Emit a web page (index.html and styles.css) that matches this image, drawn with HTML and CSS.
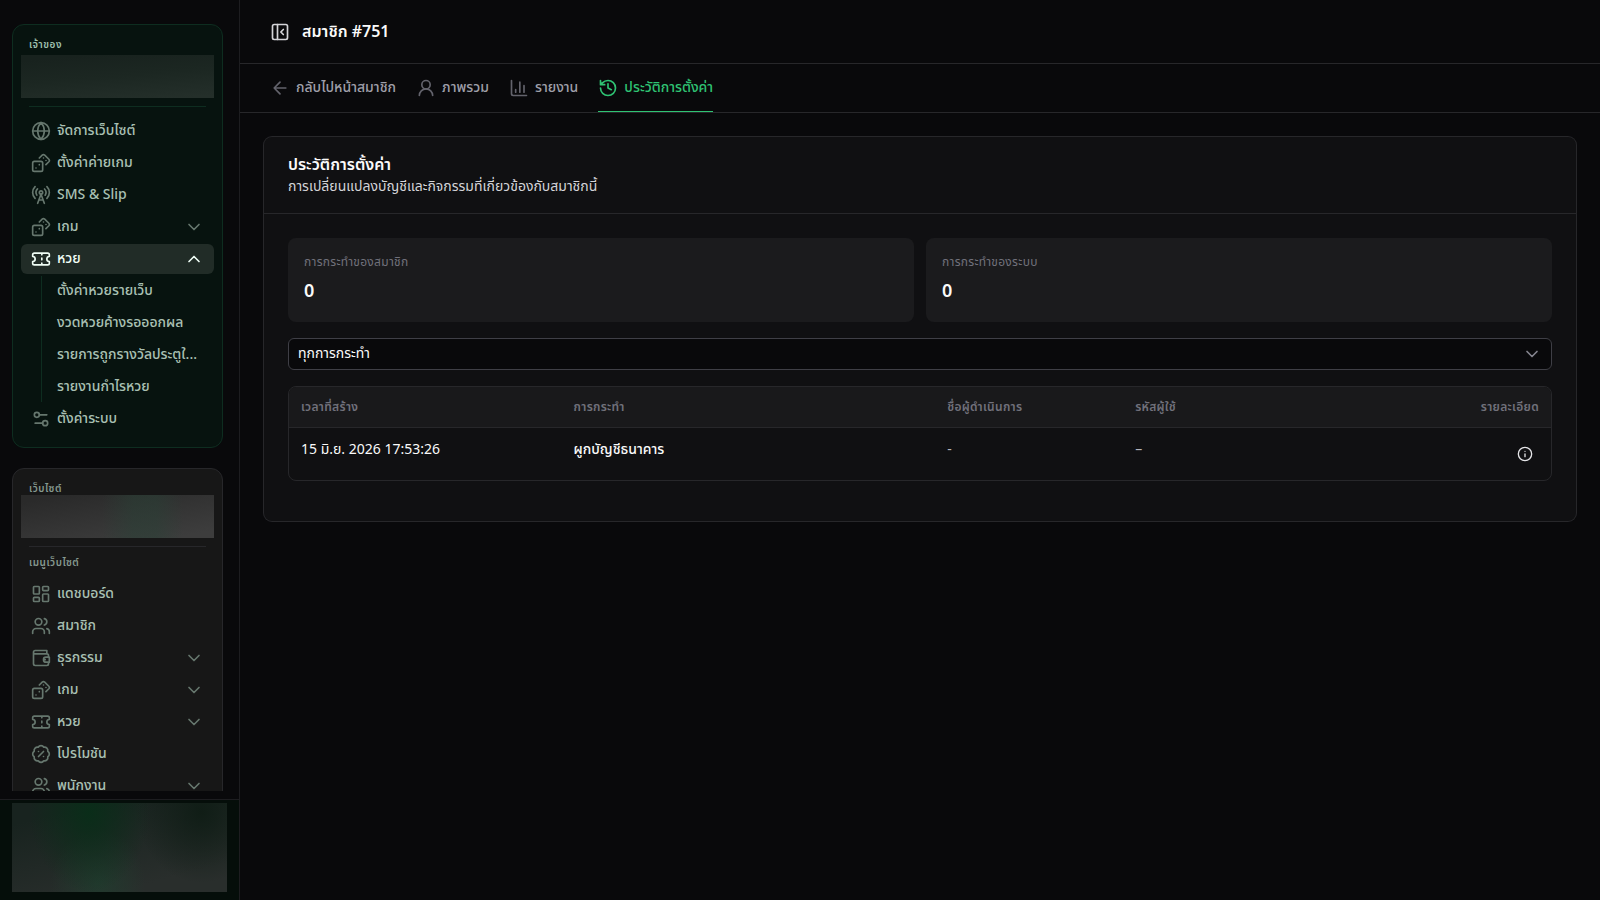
FILE: index.html
```html
<!DOCTYPE html>
<html lang="th">
<head>
<meta charset="utf-8">
<meta name="viewport" content="width=device-width, initial-scale=1">
<title>สมาชิก #751</title>
<link rel="stylesheet" href="styles.css">
</head>
<body>
<svg class="sprite" aria-hidden="true">
  <symbol id="globe" viewBox="0 0 24 24"><circle cx="12" cy="12" r="10"/><path d="M12 2a14.5 14.5 0 0 0 0 20 14.5 14.5 0 0 0 0-20M2 12h20"/></symbol>
  <symbol id="dices" viewBox="0 0 24 24"><rect width="12" height="12" x="2" y="10" rx="2"/><path d="m17.92 14 3.5-3.5a2.24 2.24 0 0 0 0-3l-5-4.92a2.24 2.24 0 0 0-3 0L10 6M6 18h.01M10 14h.01M15 6h.01M18 9h.01"/></symbol>
  <symbol id="tower" viewBox="0 0 24 24"><path d="M4.9 16.1C1 12.2 1 5.8 4.9 1.9M7.8 4.7a6.14 6.14 0 0 0-.8 7.5"/><circle cx="12" cy="9" r="2"/><path d="M16.2 4.8c2 2 2.26 5.11.8 7.47M19.1 1.9a9.96 9.96 0 0 1 0 14.1M9.5 18h5M8 22l4-11 4 11"/></symbol>
  <symbol id="ticket" viewBox="0 0 24 24"><path d="M2 9a3 3 0 0 1 0 6v2a2 2 0 0 0 2 2h16a2 2 0 0 0 2-2v-2a3 3 0 0 1 0-6V7a2 2 0 0 0-2-2H4a2 2 0 0 0-2 2ZM13 5v2M13 17v2M13 11v2"/></symbol>
  <symbol id="sliders" viewBox="0 0 24 24"><path d="M14 17H5M19 7h-9"/><circle cx="17" cy="17" r="3"/><circle cx="7" cy="7" r="3"/></symbol>
  <symbol id="dashboard" viewBox="0 0 24 24"><rect width="7" height="9" x="3" y="3" rx="1"/><rect width="7" height="5" x="14" y="3" rx="1"/><rect width="7" height="9" x="14" y="12" rx="1"/><rect width="7" height="5" x="3" y="16" rx="1"/></symbol>
  <symbol id="users" viewBox="0 0 24 24"><path d="M16 21v-2a4 4 0 0 0-4-4H6a4 4 0 0 0-4 4v2M16 3.128a4 4 0 0 1 0 7.744M22 21v-2a4 4 0 0 0-3-3.87"/><circle cx="9" cy="7" r="4"/></symbol>
  <symbol id="wallet" viewBox="0 0 24 24"><path d="M17 14h.01M21 11V9a2 2 0 0 0-2-2H5a2 2 0 0 1 0-4h14v4M3 5v14a2 2 0 0 0 2 2h14a2 2 0 0 0 2-2v-2M22 11h-4a3 3 0 0 0 0 6h4z"/></symbol>
  <symbol id="percent" viewBox="0 0 24 24"><path d="M3.85 8.62a4 4 0 0 1 4.78-4.77 4 4 0 0 1 6.74 0 4 4 0 0 1 4.78 4.78 4 4 0 0 1 0 6.74 4 4 0 0 1-4.77 4.78 4 4 0 0 1-6.75 0 4 4 0 0 1-4.78-4.77 4 4 0 0 1 0-6.76ZM15 9l-6 6M9 9h.01M15 15h.01"/></symbol>
  <symbol id="down" viewBox="0 0 24 24"><path d="m6 9 6 6 6-6"/></symbol>
  <symbol id="up" viewBox="0 0 24 24"><path d="m18 15-6-6-6 6"/></symbol>
  <symbol id="panel" viewBox="0 0 24 24"><rect width="18" height="18" x="3" y="3" rx="2"/><path d="M9 3v18M16 15l-3-3 3-3"/></symbol>
  <symbol id="back" viewBox="0 0 24 24"><path d="m12 19-7-7 7-7M19 12H5"/></symbol>
  <symbol id="user" viewBox="0 0 24 24"><circle cx="12" cy="8" r="5"/><path d="M20 21a8 8 0 0 0-16 0"/></symbol>
  <symbol id="chart" viewBox="0 0 24 24"><path d="M3 3v16a2 2 0 0 0 2 2h16M18 17V9M13 17V5M8 17v-3"/></symbol>
  <symbol id="history" viewBox="0 0 24 24"><path d="M3 12a9 9 0 1 0 9-9 9.75 9.75 0 0 0-6.74 2.74L3 8M3 3v5h5M12 7v5l4 2"/></symbol>
  <symbol id="info" viewBox="0 0 24 24"><circle cx="12" cy="12" r="10"/><path d="M12 16v-4M12 8h.01"/></symbol>
</svg>
<div class="app">
  <aside class="sidebar">
    <div class="sidebar-scroll">
      <section class="group group-owner">
        <h2 class="group-label">เจ้าของ</h2>
        <div class="masked masked-owner"></div>
        <hr class="rule">
        <nav class="menu">
          <a class="item" href="#"><svg class="icon"><use href="#globe"/></svg><span class="item-text">จัดการเว็บไซต์</span></a>
          <a class="item" href="#"><svg class="icon"><use href="#dices"/></svg><span class="item-text">ตั้งค่าค่ายเกม</span></a>
          <a class="item" href="#"><svg class="icon"><use href="#tower"/></svg><span class="item-text">SMS &amp; Slip</span></a>
          <button class="item" type="button"><svg class="icon"><use href="#dices"/></svg><span class="item-text">เกม</span><svg class="icon"><use href="#down"/></svg></button>
          <button class="item item-active" type="button" aria-expanded="true"><svg class="icon"><use href="#ticket"/></svg><span class="item-text">หวย</span><svg class="icon"><use href="#up"/></svg></button>
          <div class="submenu">
            <a class="item" href="#"><span class="item-text">ตั้งค่าหวยรายเว็บ</span></a>
            <a class="item" href="#"><span class="item-text">งวดหวยค้างรอออกผล</span></a>
            <a class="item" href="#"><span class="item-text">รายการถูกรางวัลประตูใ...</span></a>
            <a class="item" href="#"><span class="item-text">รายงานกำไรหวย</span></a>
          </div>
          <a class="item" href="#"><svg class="icon"><use href="#sliders"/></svg><span class="item-text">ตั้งค่าระบบ</span></a>
        </nav>
      </section>
      <section class="group group-site">
        <h2 class="group-label group-label-tight">เว็บไซต์</h2>
        <div class="masked masked-site"></div>
        <hr class="rule">
        <h3 class="group-label group-label-menu">เมนูเว็บไซต์</h3>
        <nav class="menu">
          <a class="item" href="#"><svg class="icon"><use href="#dashboard"/></svg><span class="item-text">แดชบอร์ด</span></a>
          <a class="item" href="#"><svg class="icon"><use href="#users"/></svg><span class="item-text">สมาชิก</span></a>
          <button class="item" type="button"><svg class="icon"><use href="#wallet"/></svg><span class="item-text">ธุรกรรม</span><svg class="icon"><use href="#down"/></svg></button>
          <button class="item" type="button"><svg class="icon"><use href="#dices"/></svg><span class="item-text">เกม</span><svg class="icon"><use href="#down"/></svg></button>
          <button class="item" type="button"><svg class="icon"><use href="#ticket"/></svg><span class="item-text">หวย</span><svg class="icon"><use href="#down"/></svg></button>
          <a class="item" href="#"><svg class="icon"><use href="#percent"/></svg><span class="item-text">โปรโมชัน</span></a>
          <button class="item" type="button"><svg class="icon"><use href="#users"/></svg><span class="item-text">พนักงาน</span><svg class="icon"><use href="#down"/></svg></button>
        </nav>
      </section>
    </div>
    <div class="account"><div class="masked masked-account"></div></div>
  </aside>
  <div class="page">
    <header class="topbar">
      <button class="icon-button" type="button" aria-label="ย่อเมนู"><svg class="icon"><use href="#panel"/></svg></button>
      <h1 class="page-title">สมาชิก #751</h1>
    </header>
    <nav class="tabs">
      <a class="tab" href="#"><svg class="icon"><use href="#back"/></svg><span class="tab-text">กลับไปหน้าสมาชิก</span></a>
      <a class="tab" href="#"><svg class="icon"><use href="#user"/></svg><span class="tab-text">ภาพรวม</span></a>
      <a class="tab" href="#"><svg class="icon"><use href="#chart"/></svg><span class="tab-text">รายงาน</span></a>
      <a class="tab tab-active" href="#" aria-current="page"><svg class="icon"><use href="#history"/></svg><span class="tab-text">ประวัติการตั้งค่า</span></a>
    </nav>
    <main class="content">
      <section class="card">
        <header class="card-header">
          <h2 class="card-title">ประวัติการตั้งค่า</h2>
          <p class="card-subtitle">การเปลี่ยนแปลงบัญชีและกิจกรรมที่เกี่ยวข้องกับสมาชิกนี้</p>
        </header>
        <div class="card-body">
          <div class="stats">
            <div class="stat"><p class="stat-label">การกระทำของสมาชิก</p><p class="stat-value">0</p></div>
            <div class="stat"><p class="stat-label">การกระทำของระบบ</p><p class="stat-value">0</p></div>
          </div>
          <div class="select-wrap">
            <select class="select" aria-label="การกระทำ"><option>ทุกการกระทำ</option></select>
            <svg class="icon select-arrow"><use href="#down"/></svg>
          </div>
          <div class="table-wrap">
            <table class="table">
              <colgroup><col class="col-time"><col class="col-action"><col class="col-actor"><col class="col-user"><col class="col-detail"></colgroup>
              <thead><tr><th>เวลาที่สร้าง</th><th>การกระทำ</th><th>ชื่อผู้ดำเนินการ</th><th>รหัสผู้ใช้</th><th class="end">รายละเอียด</th></tr></thead>
              <tbody><tr><td>15 มิ.ย. 2026 17:53:26</td><td class="strong">ผูกบัญชีธนาคาร</td><td class="dim">-</td><td class="dim">–</td><td class="end"><button class="info-button" type="button" aria-label="รายละเอียด"><svg class="icon icon-small"><use href="#info"/></svg></button></td></tr></tbody>
            </table>
          </div>
        </div>
      </section>
    </main>
  </div>
</div>
</body>
</html>
```
FILE: styles.css
```css
* { box-sizing: border-box; }
body {
  margin: 0;
  background: #09090b;
  color: #fafafa;
  font-family: "Noto Sans", "Noto Sans Thai", sans-serif;
  font-size: 14px;
  line-height: 20px;
}
h1, h2, h3, p { margin: 0; }
a { color: inherit; text-decoration: none; }
button, select { font: inherit; color: inherit; background: none; border: 0; padding: 0; }
.sprite { display: none; }
.icon {
  width: 20px;
  height: 20px;
  flex: none;
  fill: none;
  stroke: currentColor;
  stroke-width: 2;
  stroke-linecap: round;
  stroke-linejoin: round;
}
.icon-small { width: 16px; height: 16px; }

.app { display: flex; height: 100vh; }
.sidebar {
  width: 240px;
  flex: none;
  display: flex;
  flex-direction: column;
  border-right: 1px solid #1d1d20;
}
.sidebar-scroll {
  flex: 1;
  min-height: 0;
  overflow: hidden;
  display: flex;
  flex-direction: column;
  gap: 20px;
  margin-bottom: 8px;
  padding: 24px 16px 0 12px;
}
.group { flex: none; border: 1px solid; border-radius: 12px; padding: 8px 8px 13px; }
.group-owner { background: #07130f; border-color: #0e2d20; }
.group-site { background: #171717; border-color: #27272a; }
.group-label {
  padding: 0 8px;
  font-size: 10px;
  line-height: 22px;
  font-weight: 600;
  letter-spacing: 0.5px;
  color: #9dbfad;
}
.group-site .group-label { color: #869990; }
.group-label-tight { height: 18px; }
.group-label-menu { padding-bottom: 6px; }
.masked { height: 43px; }
.masked-owner { background: linear-gradient(175deg, #18221e 10%, #1c2722 50%, #242f2a 95%); }
.masked-site {
  background:
    linear-gradient(90deg, transparent 42%, #28423670 58%, #28423670 70%, transparent 84%),
    linear-gradient(170deg, #2a2a2a 10%, #3d3d3d 90%);
}
.rule { height: 1px; margin: 8px 8px 9px; border: 0; background: #0e2d20; }
.group-site .rule { margin-bottom: 4px; background: #27272a; }
.menu, .submenu { display: flex; flex-direction: column; gap: 2px; }
.item {
  display: flex;
  align-items: center;
  gap: 6px;
  height: 30px;
  padding: 0 10px;
  border-radius: 6px;
  text-align: left;
  font-weight: 500;
  color: #a9c0b3;
}
.item .icon { color: #66776e; }
.item-text { flex: 1; min-width: 0; padding-bottom: 2px; white-space: nowrap; }
.item-active { background: #212c27; color: #effdf5; }
.item-active .icon { color: #effdf5; }
.submenu { margin-left: 20px; border-left: 1px solid #0e2d20; }
.submenu .item { padding: 0 16px 0 15px; }
.account { padding: 3px 12px 8px; border-top: 1px solid #1d1d20; background: #050e0a; }
.masked-account {
  height: 89px;
  background:
    radial-gradient(ellipse 28% 90% at 36% 10%, #0a2d19 0, transparent 100%),
    radial-gradient(ellipse 30% 80% at 88% 10%, #101d16 0, transparent 100%),
    radial-gradient(ellipse 22% 60% at 40% 90%, #223a2e 0, transparent 100%),
    linear-gradient(165deg, #18231f 15%, #292e2c 80%);
}

.page { flex: 1; min-width: 0; }
.topbar {
  display: flex;
  align-items: center;
  gap: 12px;
  height: 64px;
  padding: 0 30px;
  border-bottom: 1px solid #27272a;
}
.icon-button { display: flex; color: #d4d4d8; }
.page-title { padding-bottom: 2px; font-size: 16px; line-height: 24px; font-weight: 600; }
.tabs {
  display: flex;
  gap: 20px;
  height: 49px;
  padding: 0 30px;
  border-bottom: 1px solid #27272a;
}
.tab { display: flex; align-items: center; gap: 6px; color: #9f9fa9; font-weight: 500; }
.tab-text { padding-bottom: 2px; }
.tab .icon { color: #63636c; }
.tab-active, .tab-active .icon { color: #2fc373; }
.tab-active { box-shadow: inset 0 -1px #2fc373; }
.content { padding: 24px; }
.card { border-radius: 8px; background: #101012; box-shadow: 0 0 0 1px #27272a; }
.card-header { padding: 15px 24px 17px; border-bottom: 1px solid #27272a; }
.card-title { font-size: 16px; line-height: 24px; font-weight: 600; }
.card-subtitle { color: #d4d4d8; }
.card-body { display: flex; flex-direction: column; gap: 16px; padding: 24px 24px 40px; }
.stats { display: grid; grid-template-columns: 1fr 1fr; gap: 12px; }
.stat { padding: 14px 16px 18px; border-radius: 8px; background: #1b1b1d; }
.stat-label { font-size: 12px; letter-spacing: 0.3px; color: #71717b; }
.stat-value { margin-top: 4px; font-size: 18px; line-height: 28px; font-weight: 600; }
.select-wrap { display: grid; align-items: center; }
.select-wrap > * { grid-area: 1 / 1; }
.select {
  appearance: none;
  width: 100%;
  height: 32px;
  padding: 0 9px 2px;
  border: 1px solid #3f3f46;
  border-radius: 6px;
  background: #09090b;
}
.select-arrow { justify-self: end; margin-right: 10px; color: #85858f; pointer-events: none; }
.table-wrap { border: 1px solid #27272a; border-radius: 8px; overflow: hidden; }
.table { width: 100%; table-layout: fixed; border-spacing: 0; }
.col-time { width: 21.6%; }
.col-action { width: 29.6%; }
.col-actor { width: 14.9%; }
.col-user { width: 16%; }
.table th {
  height: 41px;
  padding: 0 12px;
  border-bottom: 1px solid #27272a;
  background: #19191b;
  color: #71717b;
  font-size: 12px;
  font-weight: 600;
  letter-spacing: 0.3px;
  text-align: left;
}
.table td { height: 52px; padding: 11px 12px; vertical-align: top; }
.table .end { text-align: right; }
.table .strong { font-weight: 500; }
.table .dim { color: #b4b4bb; }
.table td.end { padding-top: 12px; }
.info-button { display: inline-flex; padding: 6px; color: #e4e4e7; vertical-align: top; }
```
